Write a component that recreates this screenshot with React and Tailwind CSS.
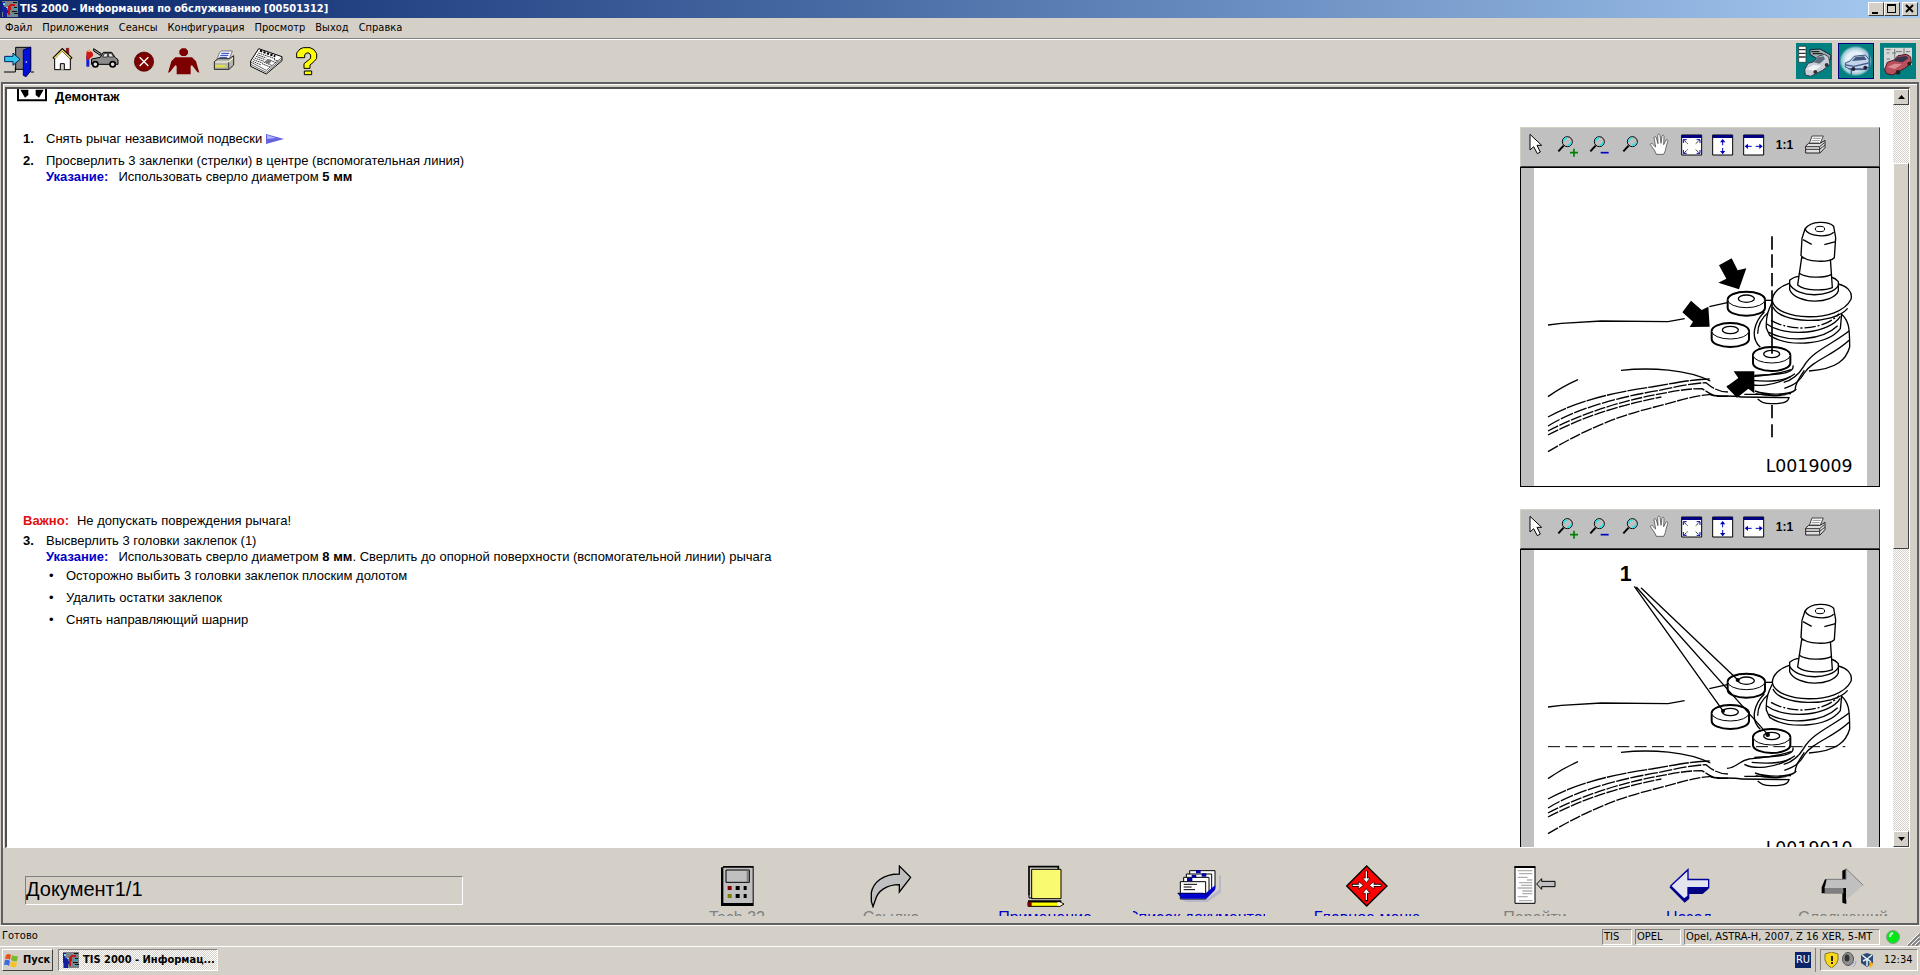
import React from 'react';

const MENU = ['Файл', 'Приложения', 'Сеансы', 'Конфигурация', 'Просмотр', 'Выход', 'Справка'];

const RAISED = 'bg-[#d4d0c8] border border-t-white border-l-white border-r-[#404040] border-b-[#404040]';
const SUNKEN = 'border border-t-[#808080] border-l-[#808080] border-r-white border-b-white';
const DITHER = 'bg-[repeating-conic-gradient(#ffffff_0_25%,#d4d0c8_0_50%)] bg-[length:2px_2px]';

function AppIcon() {
  return (
    <svg width="16" height="16" viewBox="0 0 16 16" shapeRendering="crispEdges" className="shrink-0">
      <rect width="16" height="16" fill="#7d8288" />
      <path d="M0 1h3v3H2v2h3v3h1v3H5v4H1v-5H0z" fill="#1020a0" />
      <path d="M1 2h2v2H1zM4 6h2v1H4z" fill="#7fd8e8" />
      <path d="M6 14V5l2-2h5v2H9v3l-1 1v5z" fill="#c01818" />
      <path d="M11 1h4v1h-4zM12 6h3v1h-3zM10 10h5v1h-5zM12 12h4v1h-4z" fill="#101010" />
      <path d="M11 7h4v2h-4zM10 13h4v1h-4z" fill="#40a0b0" />
    </svg>
  );
}

/* Main toolbar drawings, one 123x93 cell each */
const TOOLS = [
  {
    label: 'Выход',
    art: (
      <>
        <path d="M47 9h45v66H47z" fill="#808080" stroke="#000" strokeWidth="3" />
        <path d="M70 17l22-9v72l-14 17-8-4z" fill="#0010d8" stroke="#000060" strokeWidth="3" />
        <path d="M12 83h34V70M92 83h10" fill="none" stroke="#000" strokeWidth="3" />
        <path d="M14 36h25V26l21 19-21 18V52H14z" fill="#30c8e8" stroke="#002060" strokeWidth="3" />
        <circle cx="79" cy="53" r="2.500" fill="#fff" />
      </>
    ),
  },
  {
    label: 'Начало',
    art: (
      <>
        <path d="M199 12h7v24l-7-6z" fill="#a01010" stroke="#600" strokeWidth="2" />
        <path d="M164 41l23-22 24 22v35h-47z" fill="#fff" stroke="#000" strokeWidth="3" />
        <path d="M160 43l27-27 28 27" fill="none" stroke="#000" strokeWidth="8" />
        <path d="M163 42l24-24 25 24" fill="none" stroke="#ffe860" strokeWidth="4" />
        <path d="M181 76V58h12v18" fill="#d4d0c8" stroke="#000" strokeWidth="3" />
      </>
    ),
  },
  {
    label: 'Автомобиль',
    art: (
      <>
        <path d="M259 34h9v33h-9z" fill="#1020d0" />
        <path d="M260 21h13l6 6v8l-14 11h-6V30z" fill="#d01818" />
        <path d="M263 16h8v7h-8z" fill="#e8a070" />
        <path d="M281 13l23 15-3 5-20-13z" fill="#909090" stroke="#000" strokeWidth="3" />
        <path d="M275 44l26-5 9-15h25l11 16 8 6v14h-80z" fill="#8c8c8c" stroke="#000" strokeWidth="3" />
        <path d="M308 38l6-11h8v11zM326 27h8l7 11h-15z" fill="#e8e8e8" stroke="#000" strokeWidth="2" />
        <circle cx="286" cy="60" r="8" fill="#ddd" stroke="#000" strokeWidth="5" />
        <circle cx="338" cy="60" r="8" fill="#ddd" stroke="#000" strokeWidth="5" />
      </>
    ),
  },
  {
    label: 'Отмена',
    art: (
      <>
        <circle cx="432" cy="52" r="29" fill="#7d0000" stroke="#400000" strokeWidth="2" />
        <path d="M419 39l26 26M445 39l-26 26" stroke="#fff" strokeWidth="4" />
      </>
    ),
  },
  {
    label: 'Клиент',
    art: (
      <>
        <path d="M545 12h12l7 7v9l-7 7h-12l-7-7v-9z" fill="#7d0000" />
        <path d="M526 39h50l12 12 10 34-6-2-16-20-4 2v25h-42V65l-4-2-16 20-6 2 10-34z" fill="#7d0000" />
      </>
    ),
  },
  {
    label: 'Печать',
    art: (
      <>
        <path d="M659 24l6-4h32l-10 25h-36z" fill="#fff" stroke="#445" strokeWidth="2" />
        <path d="M664 27h24M661 33h24M658 39h24" stroke="#1838c0" strokeWidth="3" />
        <path d="M643 52l11-9h34l13-9v28l-14 13h-44z" fill="#b8b8a8" stroke="#222" strokeWidth="3" />
        <path d="M646 53h40l13-12" fill="none" stroke="#fff" strokeWidth="3" />
        <path d="M646 62h30v7h-30z" fill="#e0e040" />
        <path d="M686 54v19" stroke="#333" strokeWidth="3" />
      </>
    ),
  },
  {
    label: 'Новости',
    art: (
      <>
        <path d="M776 13l70 24v12l-47 40-47-23V50z" fill="#fff" stroke="#000" strokeWidth="3" />
        <path d="M752 53l47 25 46-38M752 60l47 24 46-39" fill="none" stroke="#222" strokeWidth="2" />
        <path d="M780 19l46 17" stroke="#000" strokeWidth="6" strokeDasharray="7 4" />
        <path d="M775 26l50 17M771 31l28 10M768 36l28 10M764 41l28 10M760 46l28 10M758 51l26 11M822 46l14 5M817 51l14 5M786 58l26 11M791 53l26 11" stroke="#333" strokeWidth="3" strokeDasharray="5 2" />
        <path d="M803 43l14 5-10 12-14-6z" fill="#777" />
      </>
    ),
  },
  {
    label: 'Справка',
    art: (
      <>
        <path d="M890 40v-14l10-12 10-4h20l12 6 8 12v14l-8 10-12 10v10h-18V58l20-16v-10l-5-6h-8l-5 6v8z" fill="#ff0" stroke="#000" strokeWidth="3" />
        <path d="M913 80h22v11h-22z" fill="#ff0" stroke="#000" strokeWidth="3" />
      </>
    ),
  },
];

function Toolbar() {
  return (
    <div className="flex h-[43px] shrink-0 items-center border-t border-white pr-1">
      {TOOLS.map((tool, i) => (
        <button key={tool.label} aria-label={tool.label} className="w-[41px]">
          <svg width="41" height="31" viewBox={`${i * 123} 5 123 93`}>
            {tool.art}
          </svg>
        </button>
      ))}
      <div className="ml-auto flex gap-[6px]">
        <button aria-label="Каталог" className="size-9 bg-[#008080]">
          <svg width="36" height="36" viewBox="0 0 108 108">
            <path d="M42 20l30-2 32 18v14l-40-2-22-14z" fill="#9fb0b0" stroke="#123" strokeWidth="3" />
            <path d="M46 26h24M50 32h30" stroke="#222" strokeWidth="4" />
            <path d="M8 10h22v48H8z" fill="#fff" stroke="#222" strokeWidth="2" />
            <path d="M9 20h20M9 31h20M9 42h20" stroke="#333" strokeWidth="4" />
            <path d="M26 80l10-19 16-4 14-17 20-6 12 8 4 22-22 18-36 18-16-4z" fill="#c9ced8" stroke="#33404c" strokeWidth="3" />
            <path d="M53 58l14-15 16-3 4 8-16 14z" fill="#5c6c7c" />
            <path d="M30 78l22-12 24 2-20 16z" fill="#eef1f6" />
            <circle cx="58" cy="87" r="6" fill="#333" />
            <circle cx="92" cy="66" r="6" fill="#333" />
          </svg>
        </button>
        <button aria-label="Сервис" className="size-9 border border-[#000080] bg-[#008080]">
          <svg width="34" height="34" viewBox="3 3 102 102">
            <defs>
              <radialGradient id="glow">
                <stop offset="60%" stopColor="#e4f0fa" />
                <stop offset="85%" stopColor="#9fc9d6" />
                <stop offset="100%" stopColor="#008080" />
              </radialGradient>
            </defs>
            <rect x="4" y="8" width="98" height="92" rx="12" fill="url(#glow)" />
            <path d="M22 60l14-6 12-14 34-4 12 14v22l-20 8H40l-18-8z" fill="#c3d3ea" stroke="#3c5480" strokeWidth="3" />
            <path d="M42 54l10-11 26-3 8 10z" fill="#41577c" />
            <path d="M24 66l24 4 44-10M32 78h54" stroke="#46608c" strokeWidth="4" fill="none" />
            <path d="M94 22v70M40 78v18" stroke="#2c62b4" strokeWidth="4" />
            <circle cx="46" cy="78" r="6" fill="#223" />
            <circle cx="82" cy="74" r="6" fill="#223" />
          </svg>
        </button>
        <button aria-label="Кузов" className="size-9 bg-[#008080]">
          <svg width="36" height="36" viewBox="0 0 108 108">
            <path d="M12 14h84v52l-84 10z" fill="#d4d8d8" />
            <path d="M18 20h14M44 18v26M48 26h18M72 16v22M78 26h12M20 30h8M20 48h10M84 38v20M36 30h12" stroke="#777" strokeWidth="3" />
            <path d="M14 80l8-22 18-6 14-14 26-4 12 8 2 18-20 16-36 20-18-4z" fill="#b8505c" stroke="#4a1820" strokeWidth="3" />
            <path d="M40 54l14-12 24-3 8 6-18 13z" fill="#34344c" />
            <path d="M22 72l22-10 22 2-22 14z" fill="#dc8c94" />
            <circle cx="54" cy="88" r="7" fill="#222" />
            <circle cx="88" cy="62" r="6" fill="#222" />
          </svg>
        </button>
      </div>
    </div>
  );
}

function Lens({ x }) {
  return (
    <g transform={`translate(${x} 0)`}>
      <path d="M2 58l16-17" stroke="#000" strokeWidth="6" />
      <circle cx="29" cy="29" r="15" fill="#c0c0c0" stroke="#000" strokeWidth="3" />
      <path d="M18 29a11 11 0 0 1 12-11M40 30a11 11 0 0 1-12 10" fill="none" stroke="#30e0e8" strokeWidth="5" />
    </g>
  );
}

function FitFrame({ children }) {
  return (
    <>
      <path d="M17 9h60v60H17z" fill="#fff" stroke="#000" strokeWidth="3" />
      <path d="M17 9h60v9H17z" fill="#000080" />
      {children}
    </>
  );
}

/* Picture toolbar drawings, one 93x78 cell each */
const VIEW_TOOLS = [
  {
    label: 'Выбор',
    art: <path d="M27 7v47l11-10 11 21 9-5-10-20h14z" fill="#fff" stroke="#000" strokeWidth="3" />,
  },
  {
    label: 'Увеличить',
    art: (
      <>
        <Lens x={17} />
        <path d="M66 50v24M54 62h24" stroke="#008000" strokeWidth="5" />
      </>
    ),
  },
  {
    label: 'Уменьшить',
    art: (
      <>
        <Lens x={20} />
        <path d="M53 62h24" stroke="#0000c0" strokeWidth="5" />
      </>
    ),
  },
  { label: 'Лупа', art: <Lens x={26} /> },
  {
    label: 'Сдвиг',
    art: (
      <path
        d="M34 67c-2-10-14-22-18-30 2-5 8-2 14 7l2 1-5-28c1-5 6-4 7 1l5 17-1-25c1-5 6-5 7 0l3 24 3-22c2-4 6-3 6 2l-1 24 7-14c3-3 6-1 5 4l-6 22c-1 8-4 12-6 17z"
        fill="#fff"
        stroke="#333"
        strokeWidth="2"
      />
    ),
  },
  {
    label: 'Вписать',
    art: (
      <FitFrame>
        <path d="M23 24l13 12M71 24L58 36M23 64l13-12M71 64L58 52" stroke="#000" strokeWidth="3" strokeDasharray="4 2" />
        <path d="M22 33V23h10M72 33V23H62M22 54v10h10M72 54v10H62" fill="none" stroke="#0000c0" strokeWidth="3" />
      </FitFrame>
    ),
  },
  {
    label: 'По высоте',
    art: (
      <FitFrame>
        <path d="M47 24v16M47 48v16" stroke="#0000c0" strokeWidth="3" />
        <path d="M47 21l8 10H39zM47 67l8-10H39z" fill="#0000c0" />
      </FitFrame>
    ),
  },
  {
    label: 'По ширине',
    art: (
      <FitFrame>
        <path d="M24 43h17M53 43h17" stroke="#0000c0" strokeWidth="3" />
        <path d="M20 43l10-8v16zM74 43l-10-8v16z" fill="#0000c0" />
      </FitFrame>
    ),
  },
  { label: '1:1' },
  {
    label: 'Печать рисунка',
    art: (
      <>
        <path d="M36 12h34L58 40H26z" fill="#fff" stroke="#444" strokeWidth="3" />
        <path d="M38 19h24M35 26h24M32 33h24" stroke="#555" strokeWidth="2" />
        <path d="M17 42l9-8h34l15-9v22L60 63H17z" fill="#e0e0e0" stroke="#222" strokeWidth="3" />
        <path d="M17 44h42l14-12M17 52h42l15-12M59 44v18" fill="none" stroke="#333" strokeWidth="3" />
      </>
    ),
  },
];

function Rivet({ x, y }) {
  return (
    <g transform={`translate(${x} ${y})`}>
      <path d="M-56 -6v24a56 24 0 0 0 112 0v-24" fill="#fff" strokeWidth="6" />
      <ellipse cy="-6" rx="56" ry="24" fill="#fff" strokeWidth="3" />
      <path d="M-56 -6a56 24 0 0 1 112 0" fill="none" strokeWidth="6" />
      <ellipse cy="-9" rx="24" ry="11" fill="none" />
    </g>
  );
}

/* The suspension arm with its ball joint, shared by both pictures */
function Arm() {
  return (
    <g fill="none" stroke="#000" strokeWidth="4">
      <path d="M111 614l40-5 120-7 200 2 50-9M595 559l54-12M111 829c28-20 56-36 90-51M330 750c90-10 200-2 268 32" />
      <path d="M111 890c90-50 200-74 310-90 70-12 130-24 178-24" strokeDasharray="60 3" />
      <path d="M111 917c90-56 230-90 330-106 70-16 110-22 144-24 24 20 40 28 70 28" strokeDasharray="40 4" />
      <path d="M111 932c120-62 240-94 340-112 60-12 90-15 122-15 24 14 30 22 50 23h30M111 944c130-68 250-96 340-114M111 994c140-84 240-114 320-134 60-14 110-34 170-38" strokeDasharray="34 4" />
      {/* housing and ribs */}
      <path d="M760 575c-30 30-44 76-12 106M990 580c24 20 26 42 26 100-10 36-36 66-122 72" fill="#fff" />
      <path d="M740 640c0-30 12-48 34-66M1014 632c-50 40-110 60-136 106-12 20-30 40-60 48M1014 660c-44 44-110 60-134 98-12 22-26 34-60 46" />
      <path d="M648 798c30-2 34-22 66-28 40-4 90-8 126-22M700 786c30 16 90 12 140-18M600 824c30 6 60 0 90 6" />
      <path d="M846 735c4 20-20 28-116 30M852 760c-30 22-70 26-130 20M880 750c-20 30-26 40-28 60-20 14-80 16-120 2M856 806c-20 22-70 24-122 14M690 830l144 2c-4 18-30 18-54 18-20 0-28-4-40-14M700 822l140-2" />
      <path d="M784 545c-10 20-20 40-18 78l10 22c50 34 170 34 212-20l4-45" fill="#fff" />
      <path d="M766 610c60 44 190 30 222-22M774 636c60 32 160 24 206-20" />
      <path d="M780 600c70 40 170 24 204-20" strokeDasharray="34 6 6 6" />
      <path d="M834 489c-30 10-50 30-50 52 10 60 200 70 236-4 6-24-14-40-38-46" fill="#fff" />
      <path d="M786 560c20 50 180 56 224 4" />
      <path d="M836 480v28c20 46 130 44 146 4v-28c-8-10-14-12-22-14l-96-2c-16 2-22 6-28 12z" fill="#fff" />
      <path d="M836 492c24 42 124 40 146 4" />
      <path d="M872 412l-12 82c20 18 80 18 104 8l-6-88z" fill="#fff" />
      <path d="M864 458c20 16 76 16 98 4" />
      <path d="M882 326l-9 28-3 52c16 20 84 22 100 6l4-60-6-34c-16-16-68-18-86 8z" fill="#fff" />
      <path d="M882 326c10 24 70 26 86 10M876 358l26 14M940 373l34-9" />
      <ellipse cx="927" cy="326" rx="14" ry="8" strokeWidth="3" />
      <Rivet x={706} y={544} />
      <Rivet x={658} y={638} />
      <Rivet x={782} y={710} />
      <path d="M762 540h22" />
    </g>
  );
}

function DrillPicture() {
  return (
    <svg width="333" height="318" viewBox="69 143 999 954" className="bg-white">
      <Arm />
      <g fill="#000">
        <path d="M624 435l38-21 18 36 26-6-22 63-62-20 24-12z" />
        <path d="M540 541l32 28 20-10 4 60-60 1 10-16-32-28z" />
        <path d="M646 799l36-26-14-20h62v66l-18-14-34 27z" />
      </g>
      <path d="M783 348v40M783 402v40M783 458v40M783 510v190M783 854v40M783 912v39" stroke="#000" strokeWidth="5" />
      <text x="764" y="1056" fontSize="52" className="font-['DejaVu_Sans']">L0019009</text>
    </svg>
  );
}

function RivetHeadsPicture() {
  return (
    <svg width="333" height="318" viewBox="69 143 999 954" className="bg-white">
      <Arm />
      <path d="M370 252l265 372M376 254l394 442M390 256l290 276" stroke="#000" strokeWidth="4" />
      <circle cx="636" cy="626" r="6" />
      <circle cx="770" cy="697" r="7" />
      <circle cx="680" cy="533" r="6" />
      <path d="M111 733h892" stroke="#000" strokeWidth="3" strokeDasharray="36 16" />
      <text x="326" y="236" fontSize="64" fontWeight="bold" className="font-['Liberation_Sans']">1</text>
      <text x="764" y="1056" fontSize="52" className="font-['DejaVu_Sans']">L0019010</text>
    </svg>
  );
}

function PictureViewer({ children }) {
  return (
    <div className="w-[360px] shrink-0">
      <div className="flex h-10 border border-t-[#d4d0c8] border-l-[#d4d0c8] border-r-[#404040] border-b-[#404040] bg-[#c0c0c0]">
        {VIEW_TOOLS.map((tool) => (
          <button key={tool.label} aria-label={tool.label} className="flex h-[34px] w-[31px] items-center justify-center">
            {tool.art ? (
              <svg width="31" height="26" viewBox="0 0 93 78">{tool.art}</svg>
            ) : (
              <span className="text-xs font-bold">{tool.label}</span>
            )}
          </button>
        ))}
      </div>
      <div className="flex justify-center border border-black bg-[#c0c0c0]">{children}</div>
    </div>
  );
}

function Note({ children }) {
  return (
    <p>
      <b className="mr-[10px] text-[#0000c8]">Указание:</b>
      {children}
    </p>
  );
}

function DocumentView() {
  return (
    <div className="min-w-0 flex-1 overflow-hidden bg-white pr-[13px] font-['Liberation_Sans',sans-serif] text-[13px] leading-4 text-black">
      <div className="flex h-[38px] gap-2 pl-[10px]">
        <svg width="30" height="13" viewBox="0 0 90 39" className="shrink-0">
          <path d="M3 0v34h84V0" fill="none" stroke="#000" strokeWidth="6" />
          <path d="M10 2h24v16l-10 8zM80 2H56v16l10 8z" />
        </svg>
        <h1 className="font-bold">Демонтаж</h1>
      </div>

      <section className="flex h-[382px] justify-between pl-4">
        <ol className="flex flex-col gap-[6px] pt-1">
          <li className="flex">
            <b className="w-[23px]">1.</b>
            <span>Снять рычаг независимой подвески</span>
            <a href="#arm" aria-label="Перейти" className="ml-1 self-center">
              <svg width="19" height="10" viewBox="0 0 19 10">
                <path d="M0 0l18 5-18 5z" fill="#6464e0" />
                <path d="M1 1l9 3-9 1z" fill="#b4b4ff" />
              </svg>
            </a>
          </li>
          <li className="flex">
            <b className="w-[23px]">2.</b>
            <div>
              <p>Просверлить 3 заклепки (стрелки) в центре (вспомогательная линия)</p>
              <Note>
                Использовать сверло диаметром <b>5 мм</b>
              </Note>
            </div>
          </li>
        </ol>
        <PictureViewer>
          <DrillPicture />
        </PictureViewer>
      </section>

      <section className="flex justify-between pl-4">
        <div className="pt-1">
          <p className="mb-1">
            <b className="mr-2 text-[#e01010]">Важно:</b>
            Не допускать повреждения рычага!
          </p>
          <div className="flex">
            <b className="w-[23px]">3.</b>
            <div>
              <p>Высверлить 3 головки заклепок (1)</p>
              <Note>
                Использовать сверло диаметром <b>8 мм</b>. Сверлить до опорной поверхности (вспомогательной линии) рычага
              </Note>
              <ul className="mt-[3px] flex flex-col gap-[6px]">
                {['Осторожно выбить 3 головки заклепок плоским долотом', 'Удалить остатки заклепок', 'Снять направляющий шарнир'].map((line) => (
                  <li key={line} className="flex">
                    <span className="w-5 pl-[3px]">•</span>
                    {line}
                  </li>
                ))}
              </ul>
            </div>
          </div>
        </div>
        <PictureViewer>
          <RivetHeadsPicture />
        </PictureViewer>
      </section>
    </div>
  );
}

function ScrollBar() {
  return (
    <div className={`flex w-4 shrink-0 flex-col ${DITHER}`}>
      <button aria-label="Вверх" className={`flex h-4 items-center justify-center ${RAISED}`}>
        <svg width="7" height="4" viewBox="0 0 7 4"><path d="M0 4l3.500-4L7 4z" /></svg>
      </button>
      <div className="h-[58px]" />
      <div className={`h-[386px] ${RAISED}`} />
      <button aria-label="Вниз" className={`mt-auto flex h-4 items-center justify-center ${RAISED}`}>
        <svg width="7" height="4" viewBox="0 0 7 4"><path d="M0 0l3.500 4L7 0z" /></svg>
      </button>
    </div>
  );
}

/* Bottom navigation, grouped as on the bar */
const NAV_GROUPS = [
  [
    {
      label: 'Tech 32',
      off: true,
      box: '46 21 132 129',
      art: (
        <>
          <path d="M64 28h6v-4h92v120H64z" fill="#000" />
          <path d="M71 29h88v106H71z" fill="#c0c0c0" />
          <path d="M79 36h70v37H79z" fill="#c0c0c0" stroke="#000" strokeWidth="3" />
          <path d="M141 38h7v34h-7z" fill="#808080" />
          <path d="M84 84h12v12H84z" fill="#800000" />
          <path d="M84 108h12v12H84z" fill="#808000" />
          <path d="M108 84h12v12h-12zM132 84h9v12h-9zM108 108h12v12h-12zM132 108h9v12h-9z" fill="#000" />
        </>
      ),
    },
    {
      label: 'Ссылка',
      off: true,
      box: '504 21 132 129',
      art: (
        <>
          <path d="M512 108c4-30 30-60 82-62V22l38 36" fill="none" stroke="#fff" strokeWidth="3" />
          <path d="M516 146l-5-16v-26c6-30 34-56 84-56V24l34 34-34 44V80c-40 0-66 20-72 46z" fill="#c0c0c0" stroke="#000" strokeWidth="4" />
        </>
      ),
    },
    {
      label: 'Применение',
      box: '971 21 132 129',
      art: (
        <>
          <path d="M989 112V26h88v8" fill="none" stroke="#000" strokeWidth="5" />
          <path d="M997 34h88v88h-88z" fill="#fafa70" stroke="#000" strokeWidth="3" />
          <path d="M989 110v10h10" fill="none" stroke="#000" strokeWidth="3" />
          <path d="M986 127h100v5h-100z" fill="#000" />
          <path d="M986 132h96l12 6-12 7h-96z" fill="#ff0" stroke="#000" strokeWidth="3" />
          <path d="M986 132h11v13h-11z" fill="#800000" />
          <path d="M1074 133h7l9 5-9 5h-7z" fill="#fff" />
        </>
      ),
    },
    {
      label: 'Список документов',
      box: '1434 21 132 129',
      art: (
        <>
          <path d="M1450 124h72l38-28V50l8 6v46l-42 30h-66z" fill="#b8b8c8" />
          <path d="M1472 38h76v54h-76z" fill="#fff" stroke="#000" strokeWidth="3" />
          <path d="M1462 48h76v54h-76z" fill="#fff" stroke="#000" strokeWidth="3" />
          <path d="M1454 58h76v54h-76z" fill="#fff" stroke="#000" strokeWidth="3" />
          <path d="M1491 36h14v10h-14zM1508 46h14v10h-14zM1478 50h14v10h-14zM1464 60h16v10h-16z" fill="#0000a0" />
          <path d="M1444 71h76v52h-76z" fill="#fff" stroke="#000" strokeWidth="3" />
          <path d="M1454 79h40M1454 87h24M1454 95h34" stroke="#000" strokeWidth="3" />
          <path d="M1436 106h84l28-24v14l-26 26h-74z" fill="#0000d0" />
          <path d="M1436 106h76l12 4" fill="none" stroke="#000050" strokeWidth="4" />
        </>
      ),
    },
  ],
  [
    {
      label: 'Главное меню',
      box: '39 21 132 129',
      art: (
        <>
          <path d="M104 24l61 60-61 60-60-60z" fill="#f00" stroke="#000" strokeWidth="4" />
          <path d="M103 38v28M103 102v28M60 82h26M120 82h28" stroke="#000" strokeWidth="9" />
          <path d="M92 60h22l-11 14zM92 106h22l-11-14zM80 71v22l14-11zM126 71v22l-14-11z" fill="#fff" stroke="#000" strokeWidth="2" />
          <path d="M103 40v24M103 104v22M62 82h22M122 82h24" stroke="#fff" strokeWidth="4" />
        </>
      ),
    },
  ],
  [
    {
      label: 'Перейти',
      off: true,
      box: '548 21 132 129',
      art: (
        <>
          <path d="M554 26h60v110h-60z" fill="#fff" stroke="#000" strokeWidth="3" />
          <path d="M552 24h63v6h-63z" />
          <path d="M562 38h44M566 47h40M562 58h30M590 66h16M566 74h40M572 82h34M562 90h44M576 99h30M576 107h30M562 116h30M566 128h40" stroke="#b0b0b0" strokeWidth="4" />
          <path d="M619 78l15-16v8h40v16h-40v8z" fill="#c0c0c0" stroke="#000" strokeWidth="3" />
        </>
      ),
    },
    {
      label: 'Назад',
      box: '1011 21 132 129',
      art: (
        <>
          <path d="M1018 88l46-26h72v30l-18 16h-40v14l-14 12z" fill="#000080" />
          <path d="M1022 84l52-49v30h62v24h-62v26l-12 8z" fill="#e4e4f0" stroke="#0000a0" strokeWidth="4" />
        </>
      ),
    },
    {
      label: 'Следующий',
      off: true,
      box: '1473 21 132 129',
      art: (
        <>
          <path d="M1475 88l10-24h52V38l12-6v106l-12-4v-28h-62z" fill="#000" />
          <path d="M1484 86h56v20h-56z" fill="#808080" />
          <path d="M1490 64h58V32l52 50-52 44v-36h-64z" fill="#c0c0c0" />
          <path d="M1490 64h58V32l52 50" fill="none" stroke="#808080" strokeWidth="3" />
        </>
      ),
    },
  ],
];

function BottomBar() {
  return (
    <div className="flex h-[75px] shrink-0 items-start justify-between pr-2 pl-[22px]">
      <input
        readOnly
        aria-label="Документ"
        value="Документ1/1"
        className={`mt-7 h-[29px] w-[438px] bg-transparent pb-[2px] font-['Liberation_Sans',sans-serif] text-xl outline-none ${SUNKEN}`}
      />
      <nav className="flex gap-9 pt-[17px]">
        {NAV_GROUPS.map((group, i) => (
          <div key={i} className="flex gap-[22px]">
            {group.map((item) => (
              <button key={item.label} className="flex w-[132px] flex-col items-center">
                <svg width="44" height="43" viewBox={item.box}>{item.art}</svg>
                <span
                  className={`flex h-2 w-full justify-center overflow-hidden font-['Liberation_Sans',sans-serif] text-base leading-5 whitespace-nowrap ${
                    item.off ? 'text-[#808080]' : 'text-[#0000c8]'
                  }`}
                >
                  {item.label}
                </span>
              </button>
            ))}
          </div>
        ))}
      </nav>
    </div>
  );
}

function StatusBar() {
  return (
    <footer className="flex h-[21px] shrink-0 items-center border-t border-white pt-px pl-[2px]">
      <span>Готово</span>
      <div className="ml-auto flex gap-[3px]">
        <span className={`h-4 w-[30px] px-px leading-[14px] ${SUNKEN}`}>TIS</span>
        <span className={`h-4 w-[46px] px-px leading-[14px] ${SUNKEN}`}>OPEL</span>
        <span className={`h-4 w-[196px] px-px leading-[14px] whitespace-nowrap ${SUNKEN}`}>Opel, ASTRA-H, 2007, Z 16 XER, 5-MT</span>
      </div>
      <svg width="14" height="14" viewBox="0 0 14 14" className="mx-[6px]">
        <circle cx="7" cy="7" r="6.500" fill="#00e818" stroke="#8a9a8a" />
        <path d="M4 7a4 4 0 0 1 3-4" fill="none" stroke="#c8ffc8" strokeWidth="2" />
      </svg>
      <svg width="13" height="13" viewBox="0 0 13 13" className="ml-px self-end">
        <path d="M1 13L13 1M5 13l8-8M9 13l4-4" stroke="#808080" strokeWidth="2" />
        <path d="M0 12L12 0M4 12l8-8M8 12l4-4" stroke="#fff" />
      </svg>
    </footer>
  );
}

function TaskBar() {
  return (
    <div className="flex h-[29px] shrink-0 items-center border-t border-white px-[2px] pb-[2px]">
      <button className={`flex h-[22px] w-[51px] items-center gap-1 pl-px font-bold ${RAISED}`}>
        <svg width="15" height="15" viewBox="0 0 15 15" className="shrink-0">
          <path d="M2 2q3-2 5 0L6 7Q4 5 1 6z" fill="#e8501c" />
          <path d="M8 2q3 2 6 1l-1 5q-3 1-6-1z" fill="#78b828" />
          <path d="M1 7q3-1 5 1l-1 5q-2-2-5-1z" fill="#3a6ce0" />
          <path d="M7 8q3 2 6 1l-1 5q-3 1-6-1z" fill="#f8c020" />
        </svg>
        Пуск
      </button>
      <button className={`ml-[5px] flex h-[22px] w-40 items-center gap-1 pl-1 font-bold whitespace-nowrap ${SUNKEN} ${DITHER}`}>
        <AppIcon />
        TIS 2000 - Информац...
      </button>
      <span className="ml-auto h-4 w-4 bg-[#0a246a] text-center leading-4 text-white">RU</span>
      <span className="mx-1 h-6 w-px bg-[#808080]" />
      <div className={`flex h-[22px] w-[98px] items-center gap-[3px] pl-[3px] ${SUNKEN}`}>
        <svg width="15" height="16" viewBox="0 0 15 16">
          <path d="M7.500 0L14 2v6q-1 5-6.500 8Q2 13 1 8V2z" fill="#f8d818" stroke="#80742c" />
          <path d="M7 4h2v5H7zM7 10h2v2H7z" fill="#222" />
        </svg>
        <svg width="15" height="16" viewBox="0 0 15 16">
          <ellipse cx="6" cy="7" rx="5.500" ry="6.500" fill="#909090" stroke="#555" />
          <ellipse cx="5" cy="6" rx="2.500" ry="3.500" fill="#333" />
          <path d="M11 15q3-2 3-6M9 13q3-1 3-4" fill="none" stroke="#a0a0e0" />
        </svg>
        <svg width="15" height="16" viewBox="0 0 15 16">
          <path d="M1 3l6-2 6 2v8l-6 4-6-4z" fill="#2c4c74" />
          <path d="M2 3l5 4 5-4M7 7v7M3 9l4-2 4 3" fill="none" stroke="#e8f0f8" strokeWidth="1.500" />
          <path d="M9 9l5 3-4 4z" fill="#f0b020" />
        </svg>
        <time className="ml-[6px]">12:34</time>
      </div>
    </div>
  );
}

export default function App() {
  return (
    <div className="flex h-screen flex-col overflow-hidden bg-[#d4d0c8] font-['DejaVu_Sans_Condensed','DejaVu_Sans',sans-serif] text-[11px] text-black">
      <header className="flex h-[18px] shrink-0 items-center bg-linear-to-r from-[#0a246a] to-[#a6caf0] px-[2px]">
        <AppIcon />
        <h2 className="ml-[2px] font-bold whitespace-nowrap text-white">TIS 2000 - Информация по обслуживанию [00501312]</h2>
        <div className="ml-auto flex">
          <button aria-label="Свернуть" className={`h-[14px] w-4 ${RAISED}`}>
            <svg width="14" height="12" viewBox="0 0 14 12"><path d="M3 9h6v2H3z" /></svg>
          </button>
          <button aria-label="Развернуть" className={`h-[14px] w-4 ${RAISED}`}>
            <svg width="14" height="12" viewBox="0 0 14 12"><path d="M2 1h9v9H2zM3 3v6h7V3z" fillRule="evenodd" /></svg>
          </button>
          <button aria-label="Закрыть" className={`ml-[2px] h-[14px] w-4 ${RAISED}`}>
            <svg width="14" height="12" viewBox="0 0 14 12"><path d="M3 2l7 7M10 2l-7 7" stroke="#000" strokeWidth="2" /></svg>
          </button>
        </div>
      </header>

      <nav className="flex h-[21px] shrink-0 items-center gap-[10px] border-b border-[#808080] pl-[5px]">
        {MENU.map((item) => (
          <button key={item}>{item}</button>
        ))}
      </nav>

      <Toolbar />

      <main className="mx-px flex min-h-0 flex-1 flex-col border-2 border-[#606060]">
        <div className="flex min-h-0 flex-1 flex-col border-t border-l border-white pt-[2px] pr-[7px] pl-px">
          <div className="flex min-h-0 flex-1 border-t-2 border-r border-b border-l-2 border-t-[#505050] border-r-white border-b-white border-l-[#505050]">
            <DocumentView />
            <ScrollBar />
          </div>
        </div>
        <BottomBar />
      </main>

      <StatusBar />
      <TaskBar />
    </div>
  );
}
